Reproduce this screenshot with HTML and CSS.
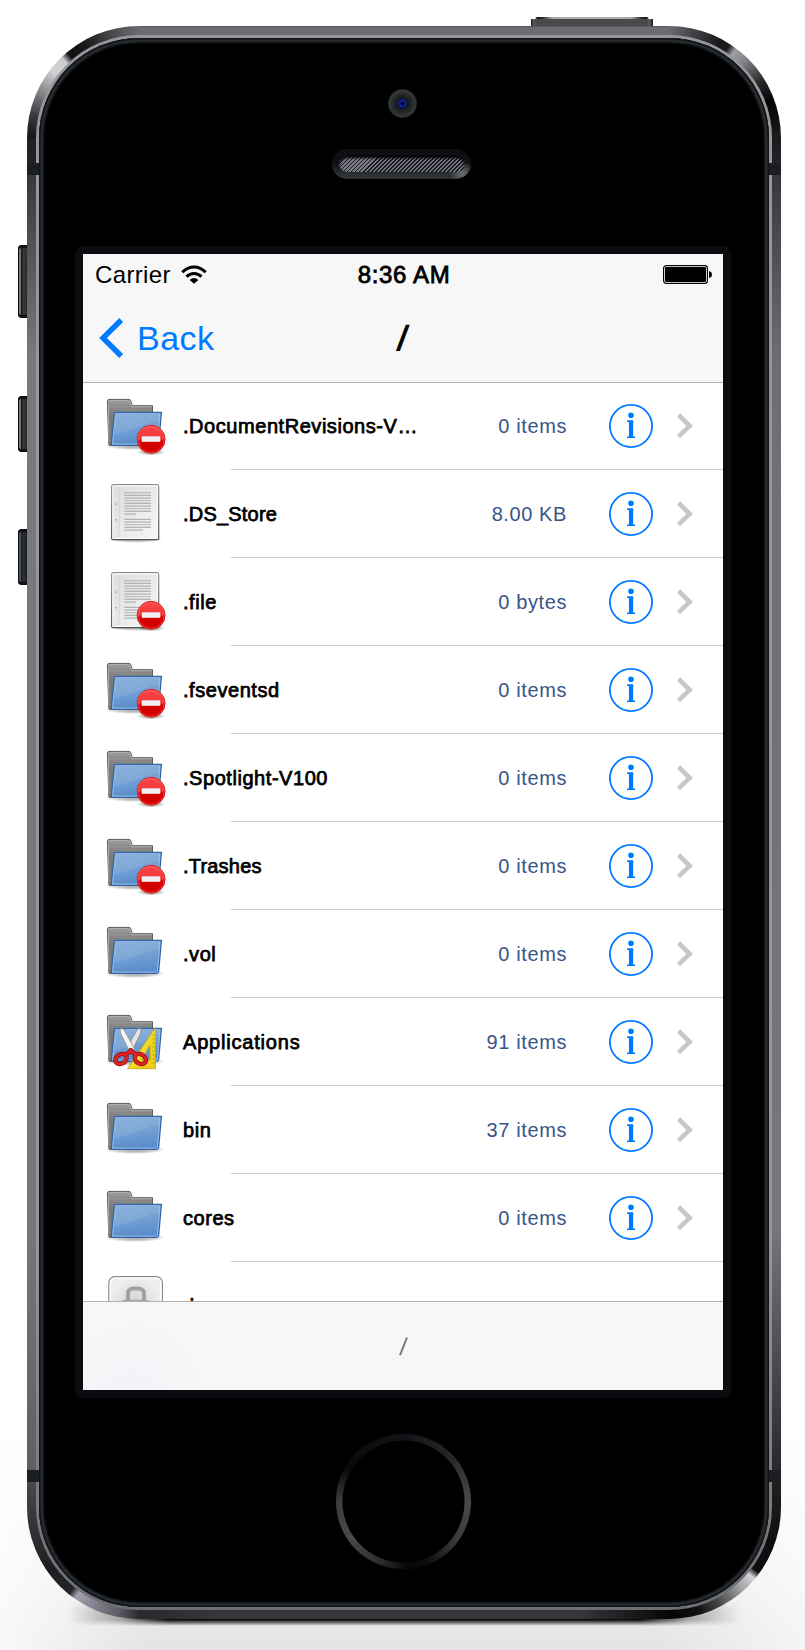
FILE: index.html
```html
<!DOCTYPE html>
<html lang="en">
<head>
<meta charset="utf-8">
<title>File browser</title>
<link rel="stylesheet" href="styles.css">
</head>
<body>
<svg class="defs" aria-hidden="true">
  <defs>
    <linearGradient id="gBack" x1="0" y1="0" x2="0" y2="1"><stop offset="0" stop-color="#979896"/><stop offset=".4" stop-color="#70716f"/><stop offset="1" stop-color="#757674"/></linearGradient>
    <linearGradient id="gFront" x1="0" y1="0" x2=".2" y2="1"><stop offset="0" stop-color="#7fa8d8"/><stop offset=".5" stop-color="#75a1d4"/><stop offset="1" stop-color="#5a8dcc"/></linearGradient>
    <linearGradient id="gRed" x1="0" y1="0" x2="0" y2="1"><stop offset="0" stop-color="#ff4a4a"/><stop offset=".5" stop-color="#f03333"/><stop offset=".56" stop-color="#d90000"/><stop offset="1" stop-color="#cc0000"/></linearGradient>
    <linearGradient id="gDoc" x1="0" y1="0" x2="1" y2="1"><stop offset="0" stop-color="#dcdcdc"/><stop offset="1" stop-color="#f7f7f7"/></linearGradient>
    <linearGradient id="gDocEdge" x1="0" y1="0" x2="0" y2="1"><stop offset="0" stop-color="#8c8d8b"/><stop offset="1" stop-color="#484948"/></linearGradient>
    <linearGradient id="gYellow" x1="0" y1="0" x2="1" y2="1"><stop offset="0" stop-color="#f8e84e"/><stop offset="1" stop-color="#e6cb10"/></linearGradient>
    <radialGradient id="gShade"><stop offset="0" stop-color="#000" stop-opacity=".4"/><stop offset=".7" stop-color="#000" stop-opacity=".18"/><stop offset="1" stop-color="#000" stop-opacity="0"/></radialGradient>
    <radialGradient id="gLock"><stop offset="0" stop-color="#d2d2d2"/><stop offset="1" stop-color="#efefef"/></radialGradient>
    <pattern id="pLines" width="4" height="2.67" patternUnits="userSpaceOnUse"><rect width="4" height="1.1" fill="#fff" opacity=".12"/></pattern>
  </defs>
  <symbol id="folder" viewBox="0 0 68 88">
    <ellipse cx="32" cy="63.500" rx="30" ry="4.500" fill="url(#gShade)"/>
    <path d="M4.400 19q0-1.600 1.600-1.600H26q1.400 0 1.800 1.400l1.400 4.900H49.500V60L8 63.400Q6 64 5.800 62Z" fill="url(#gBack)" stroke="#5c5d5b"/>
    <path d="M5 18H28L30 24.300H49V60L6 62Z" fill="url(#pLines)"/>
    <path d="M5.900 60 5.400 18.600H26.600L28.600 24.800H48.500" fill="none" stroke="#b5b6b4" stroke-width=".8"/>
    <path d="M11.600 30.500H58.400L55.600 61.500q-.2 1.800-2 1.800H9.800q-1.700 0-1.500-1.800Z" fill="url(#gFront)" stroke="#3465a4" stroke-width="1.300"/>
    <path d="M11 53Q22 51 33 46 45 40 56.500 38L57 32H12.600Z" fill="#fff" opacity=".09"/>
    <path d="M12.700 31.700H57L54.400 62.100H9.600Z" fill="none" stroke="#9dbfe6" stroke-width=".9"/>
  </symbol>
  <symbol id="file" viewBox="0 0 68 88">
    <ellipse cx="32" cy="68.500" rx="28" ry="4.500" fill="url(#gShade)"/>
    <rect x="8.700" y="14.700" width="47" height="55" rx="1.600" fill="url(#gDoc)" stroke="url(#gDocEdge)" stroke-width="1.200"/>
    <rect x="9.900" y="15.900" width="44.600" height="52.600" fill="none" stroke="#fff" stroke-width="1.100"/>
    <path d="M16 17V67" stroke="#cfcfcf" stroke-width=".8"/>
    <path d="M12.600 33.800l.5.600M12.600 49.400l.5.600" stroke="#999" stroke-width="1.200" stroke-linecap="round"/>
    <path d="M21.300 22.700H48M21.300 25.400H48M21.300 28.100H48M21.300 30.700H48M21.300 33.400H48M21.300 36.100H48M21.300 38.700H48M21.300 41.400H48M21.300 44.100H33M21.300 49.400H48M21.300 52.100H48M21.300 54.700H48M21.300 57.400H48M21.300 60.100H40" stroke="#b3b3b3" stroke-width="1.100"/>
  </symbol>
  <symbol id="denied" viewBox="0 0 68 88">
    <ellipse cx="48" cy="70" rx="14" ry="3.500" fill="url(#gShade)"/>
    <circle cx="48.100" cy="57.300" r="14" fill="url(#gRed)" stroke="#cf2222"/>
    <circle cx="48.100" cy="57.300" r="13" fill="none" stroke="#ff6b6b" stroke-opacity=".55" stroke-width=".9"/>
    <rect x="38.800" y="54.300" width="18.500" height="5.500" fill="#f0f0f0"/>
  </symbol>
  <symbol id="apps" viewBox="0 0 68 88">
    <path d="M52.500 29.500V70.700H24.500Z M47 47 38.500 61.700H47Z" fill="url(#gYellow)" fill-rule="evenodd" stroke="#c7a800" stroke-width=".8"/>
    <path d="M52 37h-2.500M52 41h-2.500M52 45h-2.500M52 49h-2.500M52 53h-2.500M52 57h-2.500M52 61h-2.500M52 65h-2.500" stroke="#a88d00" stroke-width=".7"/>
    <path d="M37.500 30.300q1 3-.5 6L28.500 54 24.500 49.500 34.500 31Z" fill="#e6e7e5" stroke="#888a85" stroke-width=".8"/>
    <path d="M17.500 30.300q-1 3 .5 6L27 54.500 31.500 50.500 20.500 31Z" fill="#f2f2f1" stroke="#888a85" stroke-width=".8"/>
    <g fill="none" stroke="#8c0a0a" stroke-width="4.400"><ellipse cx="18" cy="61" rx="6" ry="4.600" transform="rotate(-32 18 61)"/><ellipse cx="37.300" cy="61" rx="6" ry="4.600" transform="rotate(32 37.300 61)"/><path d="M23 56.500 30 51.500M32.500 56.500 25.500 51.500"/></g>
    <g fill="none" stroke="#e02222" stroke-width="2.900"><ellipse cx="18" cy="61" rx="6" ry="4.600" transform="rotate(-32 18 61)"/><ellipse cx="37.300" cy="61" rx="6" ry="4.600" transform="rotate(32 37.300 61)"/><path d="M23 56.500 29.500 51.900M32.500 56.500 26 51.900"/></g>
  </symbol>
  <symbol id="lock" viewBox="0 0 68 88">
    <rect x="5.800" y="14.600" width="53.600" height="55" rx="6" fill="url(#gLock)" stroke="#8b8c8a" stroke-width="1.200"/>
    <rect x="7.400" y="16.200" width="50.400" height="51.800" rx="4.500" fill="none" stroke="#fff" stroke-width="1.300"/>
    <path d="M25 39V32Q25 26.500 30.500 26.500H35Q41 26.500 41 32V39" fill="none" stroke="#a1a2a0" stroke-width="4"/>
    <rect x="20.300" y="37.800" width="24.600" height="18" rx="1" fill="#a1a2a0"/>
  </symbol>
  <symbol id="info" viewBox="0 0 44 44">
    <circle cx="22" cy="22" r="21.100" fill="none" stroke="#007aff" stroke-width="1.800"/>
    <circle cx="22" cy="11.300" r="2.800" fill="#007aff"/>
    <path d="M18 16.300H24.200V32.500H26.100V34H17.900V32.500H19.900V18H18Z" fill="#007aff"/>
  </symbol>
  <symbol id="chevron" viewBox="0 0 18 28">
    <path d="M2.600 3 13.600 13.800 2.600 24.600" fill="none" stroke="#c7c7cc" stroke-width="4.600"/>
  </symbol>
</svg>

<div class="stage">
  <div class="phone">
    <i class="key key-power"></i><i class="key key-mute"></i><i class="key key-up"></i><i class="key key-down"></i>
    <i class="floor-shadow"></i>
    <div class="shell">
    <div class="rim">
      <div class="glass">
        <div class="camera"></div>
        <div class="speaker"><div class="mesh"></div></div>
        <div class="bezel">
          <div class="screen">
            <header class="header">
              <div class="status">
                <div class="signal"><span class="carrier">Carrier</span>
                <svg class="wifi" viewBox="0 0 26 20"><g fill="none" stroke="#000" stroke-width="3"><path d="M1.300 7.200Q6.500 2 13 2T24.700 7.200"/><path d="M5.500 11.600Q8.800 8.400 13 8.400T20.500 11.600"/></g><path d="M8.600 15Q13 11.200 17.400 15L13 18.700Z"/></svg></div>
                <span class="time">8:36 AM</span>
                <svg class="battery" viewBox="0 0 50 20"><rect x=".6" y=".6" width="43.800" height="17.800" rx="2.600" fill="#fff" stroke="#000" stroke-width="1.200"/><rect x="2" y="2" width="41" height="15" rx="1.200"/><path d="M46 6.200h.8q2.200.8 2.200 3.300t-2.200 3.300H46Z"/></svg>
              </div>
              <div class="nav">
                <a class="back"><svg class="back-arrow" viewBox="0 0 25 40"><path d="M22.200 2 4 20 22.200 38" fill="none" stroke="#007aff" stroke-width="5.400"/></svg><span class="back-label">Back</span></a>
                <h1 class="title">/</h1>
              </div>
            </header>
            <ul class="list">
              <li class="row"><svg class="icon"><use href="#folder"/><use href="#denied"/></svg><span class="name">.DocumentRevisions-V…</span><span class="size">0 items</span><svg class="info"><use href="#info"/></svg><svg class="chevron"><use href="#chevron"/></svg></li>
              <li class="row"><svg class="icon"><use href="#file"/></svg><span class="name name-tight">.DS_Store</span><span class="size">8.00 KB</span><svg class="info"><use href="#info"/></svg><svg class="chevron"><use href="#chevron"/></svg></li>
              <li class="row"><svg class="icon"><use href="#file"/><use href="#denied"/></svg><span class="name">.file</span><span class="size">0 bytes</span><svg class="info"><use href="#info"/></svg><svg class="chevron"><use href="#chevron"/></svg></li>
              <li class="row"><svg class="icon"><use href="#folder"/><use href="#denied"/></svg><span class="name">.fseventsd</span><span class="size">0 items</span><svg class="info"><use href="#info"/></svg><svg class="chevron"><use href="#chevron"/></svg></li>
              <li class="row"><svg class="icon"><use href="#folder"/><use href="#denied"/></svg><span class="name">.Spotlight-V100</span><span class="size">0 items</span><svg class="info"><use href="#info"/></svg><svg class="chevron"><use href="#chevron"/></svg></li>
              <li class="row"><svg class="icon"><use href="#folder"/><use href="#denied"/></svg><span class="name name-tight">.Trashes</span><span class="size">0 items</span><svg class="info"><use href="#info"/></svg><svg class="chevron"><use href="#chevron"/></svg></li>
              <li class="row"><svg class="icon"><use href="#folder"/></svg><span class="name">.vol</span><span class="size">0 items</span><svg class="info"><use href="#info"/></svg><svg class="chevron"><use href="#chevron"/></svg></li>
              <li class="row"><svg class="icon"><use href="#folder"/><use href="#apps"/></svg><span class="name name-wide">Applications</span><span class="size">91 items</span><svg class="info"><use href="#info"/></svg><svg class="chevron"><use href="#chevron"/></svg></li>
              <li class="row"><svg class="icon"><use href="#folder"/></svg><span class="name">bin</span><span class="size">37 items</span><svg class="info"><use href="#info"/></svg><svg class="chevron"><use href="#chevron"/></svg></li>
              <li class="row"><svg class="icon"><use href="#folder"/></svg><span class="name">cores</span><span class="size">0 items</span><svg class="info"><use href="#info"/></svg><svg class="chevron"><use href="#chevron"/></svg></li>
              <li class="row row-last"><svg class="icon"><use href="#lock"/></svg><span class="name">dev</span></li>
            </ul>
            <footer class="toolbar"><span class="path">/</span></footer>
          </div>
        </div>
        <div class="home"></div>
      </div>
    </div>
    </div>
  </div>
</div>
</body>
</html>
```
FILE: styles.css
```css
* { box-sizing: border-box; }
body { margin: 0; font-family: "Liberation Sans", Arial, sans-serif; background: #fff; }
.defs { position: absolute; width: 0; height: 0; }

.stage {
  width: 805px; height: 1650px; overflow: hidden;
  padding: 26px 24px 0 27px;
  background:
    linear-gradient(90deg, rgba(255,255,255,.75), rgba(255,255,255,0) 18%, rgba(255,255,255,0) 82%, rgba(255,255,255,.6)),
    linear-gradient(#fff 1420px, #f2f2f2 1560px, #e4e4e4 1650px);
}
.phone { position: relative; width: 754px; height: 1593px; }

.floor-shadow {
  position: absolute; left: 40px; right: 40px; bottom: -7px; height: 26px;
  background: linear-gradient(90deg, rgba(0,0,0,0), rgba(0,0,0,.3) 8%, rgba(0,0,0,.95) 15%, rgba(0,0,0,.95) 85%, rgba(0,0,0,.3) 92%, rgba(0,0,0,0));
  -webkit-mask-image: linear-gradient(transparent, #000 40%, #000 76%, transparent);
  mask-image: linear-gradient(transparent, #000 40%, #000 76%, transparent);
}

.key { position: absolute; left: -9px; width: 12px; border-radius: 4px 0 0 4px;
  background: linear-gradient(90deg, #111 0 1px, #77777a 1px 3px, #1a1a1c 3px 4px, #3c3c3f 5px, #2a2a2c 9px);
  box-shadow: inset 0 3px 1px #111, inset 0 -3px 1px #111; }
.key-mute { top: 219px; height: 73px; }
.key-up { top: 370px; height: 56px; }
.key-down { top: 503px; height: 56px; background: linear-gradient(90deg, #111 0 1px, #4a5360 1px 3px, #1a1c20 3px 4px, #2d3238 5px, #1b1e22 9px); }
.key-power { left: 504px; top: -9px; width: 122px; height: 12px; border-radius: 3px 3px 0 0; box-shadow: none;
  background:
    linear-gradient(90deg, #fff 4px, #111 6px, #333 12px, #aaa 22px, #aaa 100px, #333 110px, #111 116px, #fff 118px) 0 0 / 100% 2px no-repeat,
    linear-gradient(90deg, #222 1px, #5a5b5d 2px, #484a4a 5px, #484a4a 116px, #5a5b5d 119px, #222 121px); }

/* metal frame: conic corners joined by straight edges */
.shell {
  position: relative; width: 754px; height: 1593px; padding: 9px; border-radius: 112px; overflow: hidden;
  background:
    linear-gradient(#1d1e21, #1d1e21) 0 137px / 100% 12px no-repeat,
    linear-gradient(#1d1e21, #1d1e21) 0 1444px / 100% 12px no-repeat,
    conic-gradient(from 270deg at 100% 100%, #17171a 0, #39393c 12deg, #8a8a8e 26deg, #d2d2d5 38deg, #cfcfd2 46deg, #111113 50deg, #19191a 60deg, #48474a 75deg, #6c6b70 90deg) 0 0 / 112px 112px no-repeat,
    conic-gradient(from 0deg at 0 100%, #6c6b70 0, #464549 12deg, #19191b 28deg, #1a1a1d 33deg, #a0a0a3 37deg, #808084 45deg, #2a2a2c 58deg, #050505 70deg, #1b1b1e 90deg) 100% 0 / 112px 112px no-repeat,
    conic-gradient(from 180deg at 100% 0, #29282c 0, #5a5962 10deg, #85838f 25deg, #a19fac 35deg, #25242a 39deg, #1d1d20 55deg, #2f2f31 75deg, #3c3c3f 90deg) 0 100% / 112px 112px no-repeat,
    conic-gradient(from 90deg at 0 0, #19191b 0, #0e0e10 20deg, #0c0c0e 36deg, #d5d5d8 40deg, #98989c 50deg, #4a4a4c 62deg, #111 74deg, #050505 90deg) 100% 100% / 112px 112px no-repeat,
    linear-gradient(#17171a, #232226 137px, #38373b 149px, #79787d 330px, #77767b 1200px, #606063 1440px, #48484b 1456px, #3c3c3f 1481px) 0 0 / 50% 100% no-repeat,
    linear-gradient(#1b1b1e 112px, #242327 137px, #38373b 149px, #6e6d72 330px, #77767b 1200px, #2a292e 1440px, #1f1f22 1456px, #19191b 1481px) 100% 0 / 50% 100% no-repeat;
}
.shell::before, .shell::after { content: ""; position: absolute; left: 112px; right: 112px; height: 9px; }
.shell::before { top: 0; background: #6c6b70; box-shadow: inset 0 1px #5b5a5e; }
.shell::after { bottom: 0; height: 11px; background: linear-gradient(90deg, #29282c, #38353b 80px, #38353b 440px, #070707); }
.rim { position: relative; z-index: 1; height: 100%; padding: 3px; border-radius: 103px;
  background:
    linear-gradient(#1d1e21, #1d1e21) 0 128px / 100% 12px no-repeat,
    linear-gradient(#1d1e21, #1d1e21) 0 1435px / 100% 12px no-repeat,
    linear-gradient(#97969b, #97969b 1200px, #6e6d71); }
.glass {
  height: 100%; border-radius: 100px; background: #000; padding-right: 2px;
  display: flex; flex-direction: column; align-items: center;
  box-shadow: inset 0 0 0 1.500px #111417, inset 0 0 2px 4.500px #262d31;
}
.camera { flex: none; margin-top: 51px; width: 29px; height: 29px; margin-right: 1px; border-radius: 50%;
  background: radial-gradient(circle, #050510 0 1.500px, #1a25c0 2.500px, #101560 4px, #151a1c 5.500px, #23272a 9px, #343839 13px, #1d2021 14.500px); }
.speaker { flex: none; margin-top: 31px; width: 139px; height: 30px; margin-right: 3px; padding: 6px 6px 7px 7px; border-radius: 15px;
  background: radial-gradient(circle at 130px 24px, #6a6f70, rgba(60,66,68,0) 12px), linear-gradient(#0d1012 45%, #2f3436 90%); }
.mesh { height: 100%; border-radius: 9px; background: repeating-linear-gradient(135deg, #15141a 0 1.400px, #7b7986 1.400px 2.830px); box-shadow: inset 0 3px 3px #000; }
.bezel { flex: none; margin-top: 67px; padding: 8px; border-radius: 8px; background: #0b0c10; }
.home { flex: none; margin-top: 35px; width: 137px; height: 137px; border-radius: 50%; border: 1px solid #050506;
  background: radial-gradient(circle, #000 60.500px, rgba(0,0,0,0) 61.500px), conic-gradient(#121216, #25252a 45deg, #48484d 90deg, #3c3c40 125deg, #0c0c0e 160deg, #050507 175deg, #2c2c30 200deg, #48484d 235deg, #3c3c41 270deg, #0a0a0d 300deg, #121216); }

.screen { width: 640px; height: 1136px; overflow: hidden; background: #fff; display: flex; flex-direction: column; }
.header { position: relative; z-index: 1; flex: none; height: 129px; background: #f7f7f7; border-bottom: 1px solid #b2b2b2; }
.status { height: 40px; padding: 0 10px 0 12px; display: grid; grid-template-columns: 1fr auto 1fr; align-items: center; font-size: 24px; line-height: 40px; }
.signal { display: flex; align-items: center; }
.carrier { letter-spacing: .35px; padding-top: 1px; }
.wifi { width: 26px; height: 20px; margin-left: 10px; }
.time { letter-spacing: .65px; -webkit-text-stroke: .8px #000; padding-top: 1px; }
.battery { width: 50px; height: 20px; margin-top: 1px; justify-self: end; }
.nav { height: 88px; display: grid; grid-template-columns: 1fr auto 1fr; align-items: center; }
.back { display: flex; align-items: center; padding-left: 16px; color: #007aff; font-size: 34px; }
.back-arrow { width: 25px; height: 40px; }
.back-label { margin-left: 13px; letter-spacing: .5px; }
.title { margin: 0; font-size: 34px; font-weight: 400; -webkit-text-stroke: 1.200px #000; transform: skewX(-6deg); }

.list { list-style: none; margin: -1px 0 0; padding: 0; height: 919px; overflow: hidden; }
.row { position: relative; height: 88px; padding-left: 20px; padding-right: 29px; display: flex; align-items: center; }
.row::after { content: ""; position: absolute; left: 148px; right: 0; bottom: 0; height: 1px; background: #c8c7cc; }
.row-last::after { display: none; }
.icon { width: 68px; height: 88px; flex: none; }
.name { margin-left: 12px; flex: 1; font-size: 20px; white-space: nowrap; letter-spacing: .55px; -webkit-text-stroke: .75px #000; color: #000; }
.name-tight { letter-spacing: .2px; }
.name-wide { letter-spacing: .8px; }
.size { font-size: 20px; letter-spacing: .6px; color: #385487; }
.info { width: 44px; height: 44px; margin-left: 42px; }
.chevron { width: 18px; height: 28px; margin-left: 23px; }
.toolbar { position: relative; flex: none; height: 89px; border-top: 1px solid #b2b2b2; background: radial-gradient(circle at 50px 90px, #f1f3f7, #f7f7f7 75px);
  display: flex; align-items: center; justify-content: center; font-size: 24px; color: #6d7278; }
.path { transform: translateY(1px) skewX(-7deg); }
```
